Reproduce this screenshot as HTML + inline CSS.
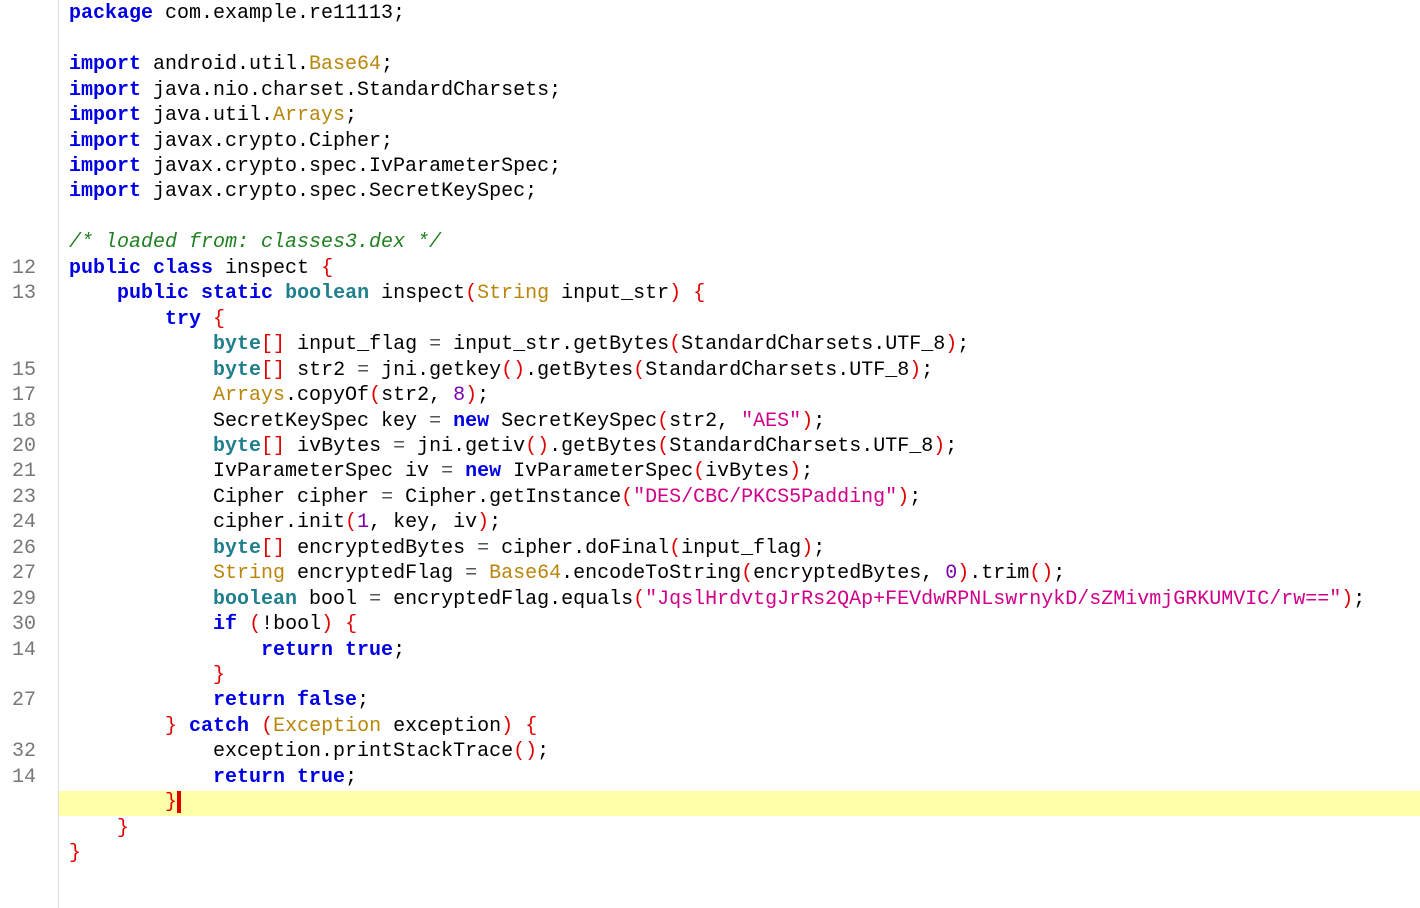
<!DOCTYPE html><html><head><style>
body{margin:0;width:1420px;height:908px;background:#fff;overflow:hidden;position:relative;font-family:"Liberation Mono",monospace;font-size:20px}
#g{position:absolute;left:0;top:0;width:58px;height:908px;border-right:1px solid #ddd}
#w{position:absolute;left:0;top:2px;width:1420px;height:906px}
.l{position:absolute;left:0;width:1420px;height:25.45px;line-height:25.45px;white-space:pre}
.n{position:absolute;left:0;width:36px;text-align:right;color:#777}
.c{position:absolute;left:69px}
.k{color:#0000e6;font-weight:bold}.t{color:#1f7f8c;font-weight:bold}.y{color:#b8860b}.p{color:#e00000}.s{color:#d0008a}.m{color:#7a00b0}.o{color:#555}.cm{color:#208020;font-style:italic}
.hl{background:#ffffaa;left:59px;width:1361px}
.cur{display:inline-block;width:4px;height:22px;background:#e00000;vertical-align:middle}
</style></head><body><div id="g"></div>
<div id="w">
<div class="l hl" style="top:788.5px"></div>
<div class="l" style="top:-0.7px"><span class="c"><span class="k">package</span> com.example.re11113;</span></div>
<div class="l" style="top:50.2px"><span class="c"><span class="k">import</span> android.util.<span class="y">Base64</span>;</span></div>
<div class="l" style="top:75.65px"><span class="c"><span class="k">import</span> java.nio.charset.StandardCharsets;</span></div>
<div class="l" style="top:101.1px"><span class="c"><span class="k">import</span> java.util.<span class="y">Arrays</span>;</span></div>
<div class="l" style="top:126.55px"><span class="c"><span class="k">import</span> javax.crypto.Cipher;</span></div>
<div class="l" style="top:152px"><span class="c"><span class="k">import</span> javax.crypto.spec.IvParameterSpec;</span></div>
<div class="l" style="top:177.45px"><span class="c"><span class="k">import</span> javax.crypto.spec.SecretKeySpec;</span></div>
<div class="l" style="top:228.35px"><span class="c cm">/* loaded from: classes3.dex */</span></div>
<div class="l" style="top:253.8px"><span class="n">12</span><span class="c"><span class="k">public class</span> inspect <span class="p">{</span></span></div>
<div class="l" style="top:279.25px"><span class="n">13</span><span class="c">    <span class="k">public static</span> <span class="t">boolean</span> inspect<span class="p">(</span><span class="y">String</span> input_str<span class="p">)</span> <span class="p">{</span></span></div>
<div class="l" style="top:304.7px"><span class="c">        <span class="k">try</span> <span class="p">{</span></span></div>
<div class="l" style="top:330.15px"><span class="c">            <span class="t">byte</span><span class="p">[]</span> input_flag <span class="o">=</span> input_str.getBytes<span class="p">(</span>StandardCharsets.UTF_8<span class="p">)</span>;</span></div>
<div class="l" style="top:355.6px"><span class="n">15</span><span class="c">            <span class="t">byte</span><span class="p">[]</span> str2 <span class="o">=</span> jni.getkey<span class="p">()</span>.getBytes<span class="p">(</span>StandardCharsets.UTF_8<span class="p">)</span>;</span></div>
<div class="l" style="top:381.05px"><span class="n">17</span><span class="c">            <span class="y">Arrays</span>.copyOf<span class="p">(</span>str2, <span class="m">8</span><span class="p">)</span>;</span></div>
<div class="l" style="top:406.5px"><span class="n">18</span><span class="c">            SecretKeySpec key <span class="o">=</span> <span class="k">new</span> SecretKeySpec<span class="p">(</span>str2, <span class="s">"AES"</span><span class="p">)</span>;</span></div>
<div class="l" style="top:431.95px"><span class="n">20</span><span class="c">            <span class="t">byte</span><span class="p">[]</span> ivBytes <span class="o">=</span> jni.getiv<span class="p">()</span>.getBytes<span class="p">(</span>StandardCharsets.UTF_8<span class="p">)</span>;</span></div>
<div class="l" style="top:457.4px"><span class="n">21</span><span class="c">            IvParameterSpec iv <span class="o">=</span> <span class="k">new</span> IvParameterSpec<span class="p">(</span>ivBytes<span class="p">)</span>;</span></div>
<div class="l" style="top:482.85px"><span class="n">23</span><span class="c">            Cipher cipher <span class="o">=</span> Cipher.getInstance<span class="p">(</span><span class="s">"DES/CBC/PKCS5Padding"</span><span class="p">)</span>;</span></div>
<div class="l" style="top:508.3px"><span class="n">24</span><span class="c">            cipher.init<span class="p">(</span><span class="m">1</span>, key, iv<span class="p">)</span>;</span></div>
<div class="l" style="top:533.75px"><span class="n">26</span><span class="c">            <span class="t">byte</span><span class="p">[]</span> encryptedBytes <span class="o">=</span> cipher.doFinal<span class="p">(</span>input_flag<span class="p">)</span>;</span></div>
<div class="l" style="top:559.2px"><span class="n">27</span><span class="c">            <span class="y">String</span> encryptedFlag <span class="o">=</span> <span class="y">Base64</span>.encodeToString<span class="p">(</span>encryptedBytes, <span class="m">0</span><span class="p">)</span>.trim<span class="p">()</span>;</span></div>
<div class="l" style="top:584.65px"><span class="n">29</span><span class="c">            <span class="t">boolean</span> bool <span class="o">=</span> encryptedFlag.equals<span class="p">(</span><span class="s">"JqslHrdvtgJrRs2QAp+FEVdwRPNLswrnykD/sZMivmjGRKUMVIC/rw=="</span><span class="p">)</span>;</span></div>
<div class="l" style="top:610.1px"><span class="n">30</span><span class="c">            <span class="k">if</span> <span class="p">(</span>!bool<span class="p">)</span> <span class="p">{</span></span></div>
<div class="l" style="top:635.55px"><span class="n">14</span><span class="c">                <span class="k">return true</span>;</span></div>
<div class="l" style="top:661px"><span class="c">            <span class="p">}</span></span></div>
<div class="l" style="top:686.45px"><span class="n">27</span><span class="c">            <span class="k">return false</span>;</span></div>
<div class="l" style="top:711.9px"><span class="c">        <span class="p">}</span> <span class="k">catch</span> <span class="p">(</span><span class="y">Exception</span> exception<span class="p">)</span> <span class="p">{</span></span></div>
<div class="l" style="top:737.35px"><span class="n">32</span><span class="c">            exception.printStackTrace<span class="p">()</span>;</span></div>
<div class="l" style="top:762.8px"><span class="n">14</span><span class="c">            <span class="k">return true</span>;</span></div>
<div class="l" style="top:788.25px"><span class="c">        <span class="p">}</span><span class="cur"></span></span></div>
<div class="l" style="top:813.7px"><span class="c">    <span class="p">}</span></span></div>
<div class="l" style="top:839.15px"><span class="c"><span class="p">}</span></span></div>
</div>
</body></html>
